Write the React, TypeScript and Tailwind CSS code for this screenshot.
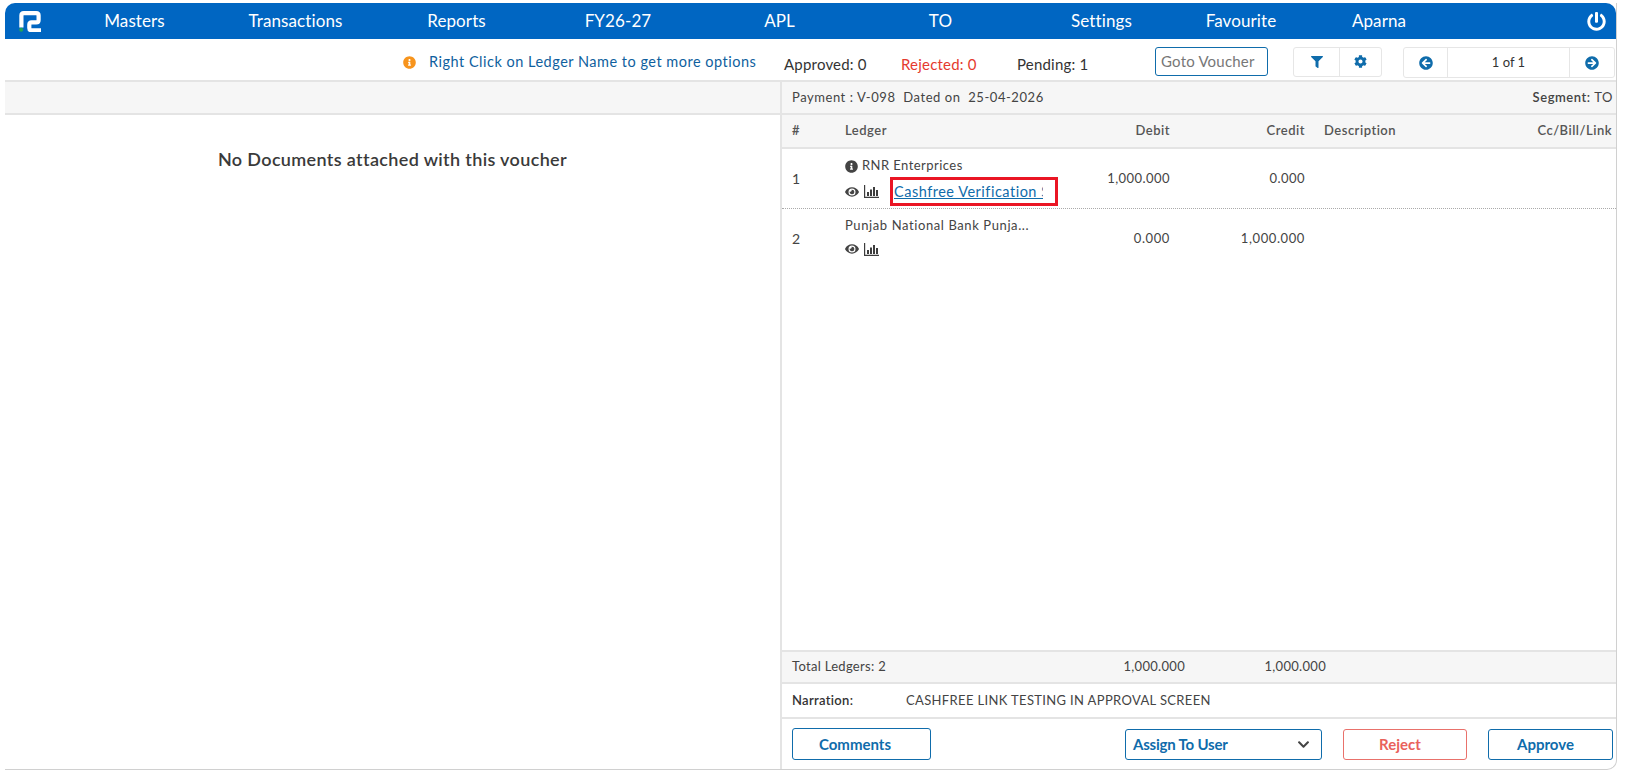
import { FaFilter, FaCog, FaArrowCircleLeft, FaArrowCircleRight, FaPowerOff, FaInfoCircle, FaEye, FaChevronDown } from "react-icons/fa";

const nav: [string, string][] = [
  ["Masters", "w-[161px]"],
  ["Transactions", "w-[161px]"],
  ["Reports", "w-[161px]"],
  ["FY26-27", "w-[162px]"],
  ["APL", "w-[161px]"],
  ["TO", "w-[161px]"],
  ["Settings", "w-[161px]"],
  ["Favourite", "w-[118px]"],
  ["Aparna", "w-[158px]"],
];

function Logo() {
  return (
    <svg viewBox="0 0 22 21" className="w-[22px] h-[21px]">
      <path d="M2.400 16.500V4.500Q2.400 2.100 4.800 2.100H17.200Q19.600 2.100 19.600 4.500V8.900Q19.600 11.300 17.200 11.300H12.700Q10.300 11.300 10.300 13.700V16.900Q10.300 19.300 12.700 19.300H22" fill="none" stroke="#fff" strokeWidth="4.200" />
      <circle cx="2.200" cy="18.800" r="2" fill="#22a35a" />
    </svg>
  );
}

function ChartIcon() {
  return (
    <svg viewBox="0 0 15 13" className="w-[15px] h-[13px]" fill="#3d3d3d">
      <path d="M0 0h1.200v11.800H15V13H0z" />
      <path d="M3 7h2v4H3zM6 4.500h2V11H6zM9 2h2v9H9zM12 5h2v6h-2z" />
    </svg>
  );
}

function RowIcons() {
  return (
    <div className="flex items-center gap-[5px]">
      <FaEye className="text-[14px] text-[#444]" />
      <ChartIcon />
    </div>
  );
}

export default function App() {
  return (
    <div className="w-[1627px] h-[774px] bg-white pt-[3px] pl-[5px] pr-[10px] pb-[4px] text-[#444] text-[13px] font-['Lato','Liberation_Sans',sans-serif] overflow-hidden">
      <div className="h-full flex flex-col border-r border-b border-[#d0d0d0] rounded-br-[10px] overflow-hidden">
        <header className="h-[36px] shrink-0 bg-[#0066c2] rounded-t-[10px] flex items-center text-white text-[17px] tracking-[0.1px]">
          <div className="w-[49px] pl-[14px] shrink-0 flex"><Logo /></div>
          {nav.map(([label, w]) => (
            <div key={label} className={`${w} shrink-0 text-center`}>{label}</div>
          ))}
          <div className="ml-[129px]"><FaPowerOff className="text-[19px]" /></div>
        </header>

        <div className="h-[43px] shrink-0 border-b-2 border-[#e4e4e4] flex items-center pt-[7px]">
          <FaInfoCircle className="ml-[398px] -mt-[2px] text-[13px] text-[#f7941d] shrink-0" />
          <span className="ml-[13px] w-[355px] shrink-0 text-[#0f5f9e] text-[14.500px] tracking-[0.5px] -mt-[2px]">Right Click on Ledger Name to get more options</span>
          <span className="w-[117px] shrink-0 mt-[2px] text-[#333] text-[15px] tracking-[0.2px]">Approved: 0</span>
          <span className="w-[116px] shrink-0 mt-[2px] text-[#e53a2e] text-[15px] tracking-[0.2px]">Rejected: 0</span>
          <span className="w-[138px] shrink-0 mt-[2px] text-[#333] text-[15px] tracking-[0.2px]">Pending: 1</span>
          <div className="w-[113px] h-[29px] -mt-[3px] shrink-0 border border-[#0f6cab] rounded-[3px] flex items-center pl-[5px] text-[15px] text-[#777] tracking-[0.2px]">Goto Voucher</div>
          <div className="ml-[25px] -mt-[3px] flex h-[30px] w-[89px] shrink-0 border border-[#e6e6e6] rounded-[3px] text-[#0f6cab]">
            <div className="w-[46px] border-r border-[#e6e6e6] flex items-center justify-center"><FaFilter className="text-[12px]" /></div>
            <div className="flex-1 flex items-center justify-center"><FaCog className="text-[13px]" /></div>
          </div>
          <div className="ml-[21px] -mt-[1px] flex h-[31px] w-[212px] shrink-0 border border-[#e6e6e6] rounded-[3px] text-[#0f6cab]">
            <div className="w-[44px] border-r border-[#e6e6e6] flex items-center justify-center"><FaArrowCircleLeft className="text-[14px]" /></div>
            <div className="flex-1 flex items-center justify-center text-[13px] text-[#333]">1 of 1</div>
            <div className="w-[45px] border-l border-[#e6e6e6] flex items-center justify-center"><FaArrowCircleRight className="text-[14px]" /></div>
          </div>
        </div>

        <div className="flex-1 flex min-h-0">
          <section className="w-[775px] shrink-0 flex flex-col">
            <div className="h-[33px] bg-[#f6f6f6] border-b-2 border-[#e4e4e4]" />
            <div className="pt-[31px] text-center text-[18px] font-semibold text-[#3a3a3a] tracking-[0.35px]">No Documents attached with this voucher</div>
          </section>

          <section className="flex-1 flex flex-col border-l-2 border-[#e4e4e4] min-w-0">
            <div className="h-[33px] shrink-0 bg-[#f6f6f6] border-b-2 border-[#e4e4e4] flex items-center justify-between pl-[10px] pr-[3px] tracking-[0.55px]">
              <span>Payment : V-098&nbsp; Dated on &nbsp;25-04-2026</span>
              <span><span className="font-semibold">Segment:</span> TO</span>
            </div>

            <div className="h-[34px] shrink-0 bg-[#f6f6f6] border-b-2 border-[#e4e4e4] grid grid-cols-[53px_268px_57px_135px_1fr_auto] items-center pl-[10px] pr-[4px] font-semibold text-[#555] tracking-[0.5px]">
              <span>#</span>
              <span>Ledger</span>
              <span className="text-right">Debit</span>
              <span className="text-right">Credit</span>
              <span className="pl-[19px]">Description</span>
              <span>Cc/Bill/Link</span>
            </div>

            <div className="flex-1 min-h-0">
              <div className="h-[60px] border-b border-dotted border-[#aaa] grid grid-cols-[53px_268px_57px_135px] items-center pl-[10px] tracking-[0.45px]">
                <span className="text-[14px]">1</span>
                <div className="flex flex-col h-full pt-[9px]">
                  <div className="flex items-center gap-[4px] h-[16px]"><FaInfoCircle className="text-[13px] text-[#444]" /><span>RNR Enterprices</span></div>
                  <div className="flex items-center mt-[3px]">
                    <RowIcons />
                    <div className="ml-[11px] w-[168px] h-[29px] border-[3px] border-[#ea1524] pl-[1px] flex items-center">
                      <span className="block w-[149px] overflow-hidden whitespace-nowrap underline text-[#0f6cab] text-[14.500px] tracking-[0.5px]">Cashfree Verification Status</span>
                    </div>
                  </div>
                </div>
                <span className="text-right -ml-[40px] whitespace-nowrap">1,000.000</span>
                <span className="text-right">0.000</span>
              </div>
              <div className="h-[60px] grid grid-cols-[53px_268px_57px_135px] items-center pl-[10px] tracking-[0.6px]">
                <span className="text-[14px] -mt-[2px]">2</span>
                <div className="flex flex-col h-full pt-[7px]">
                  <div className="h-[16px] whitespace-nowrap">Punjab National Bank Punja...</div>
                  <div className="mt-[10px]"><RowIcons /></div>
                </div>
                <span className="text-right">0.000</span>
                <span className="text-right whitespace-nowrap">1,000.000</span>
              </div>
            </div>

            <div className="h-[34px] shrink-0 bg-[#f6f6f6] border-y-2 border-[#e4e4e4] grid grid-cols-[298px_95px_141px] items-center pl-[10px] tracking-[0.3px]">
              <span>Total Ledgers: 2</span>
              <span className="text-right">1,000.000</span>
              <span className="text-right">1,000.000</span>
            </div>
            <div className="h-[35px] shrink-0 border-b-2 border-[#e4e4e4] flex items-center pl-[10px]">
              <span className="w-[114px] font-semibold text-[#333] tracking-[0.3px]">Narration:</span>
              <span className="tracking-[0.35px]">CASHFREE LINK TESTING IN APPROVAL SCREEN</span>
            </div>
            <div className="h-[50px] shrink-0 flex items-center pl-[10px] text-[15px] font-bold text-[#0f6cab]">
              <button className="w-[139px] h-[32px] border border-[#0f6cab] rounded-[3px] pr-[13px]">Comments</button>
              <button className="ml-[194px] w-[197px] h-[31px] border border-[#0f6cab] rounded-[3px] flex items-center justify-between pl-[7px] pr-[11px]">
                <span className="tracking-[-0.2px]">Assign To User</span>
                <FaChevronDown className="text-[13px] text-[#444]" />
              </button>
              <button className="ml-[21px] w-[124px] h-[31px] border border-[#e9716b] rounded-[3px] text-[#e9615b] pr-[10px]">Reject</button>
              <button className="ml-[21px] w-[125px] h-[31px] border border-[#0f6cab] rounded-[3px] pr-[10px]">Approve</button>
            </div>
          </section>
        </div>
      </div>
    </div>
  );
}
